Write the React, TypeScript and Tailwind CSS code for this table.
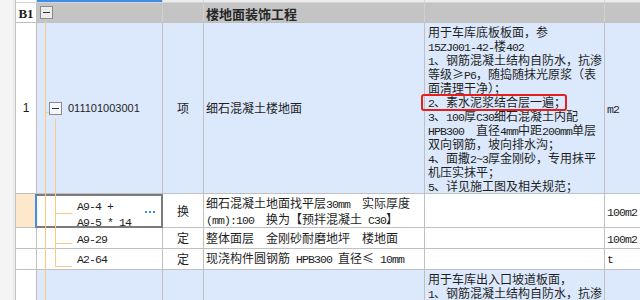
import React from "react";

function T({ s }: { s: string }) {
  const parts = s.split(/([ -~]+)/);
  return (
    <span className="whitespace-pre">
      {parts.map((p, i) =>
        p === "" ? null : /^[ -~]+$/.test(p) ? (
          <span key={i} className="font-['Liberation_Mono',monospace] text-[11.5px] tracking-[-0.9px]">
            {p}
          </span>
        ) : (
          <span key={i}>{p}</span>
        )
      )}
    </span>
  );
}

function MinusBox({ light }: { light?: boolean }) {
  return (
    <div
      className={
        "w-[13px] h-[13px] shrink-0 border border-[#8a8a8a] flex items-center justify-center " +
        (light ? "bg-[#f4f7fc]" : "bg-[#ececec]")
      }
    >
      <div className="w-[7px] h-[1px] bg-[#333333]" />
    </div>
  );
}

const descMain = [
  "用于车库底板板面，参",
  "15ZJ001-42-楼402",
  "1、钢筋混凝土结构自防水，抗渗",
  "等级≥P6，随捣随抹光原浆（表",
  "面清理干净）；",
  "2、素水泥浆结合层一遍；",
  "3、100厚C30细石混凝土内配",
  "HPB300　直径4mm中距200mm单层",
  "双向钢筋，坡向排水沟；",
  "4、面撒2~3厚金刚砂，专用抹平",
  "机压实抹平；",
  "5、详见施工图及相关规范；",
];

const descLast = ["用于车库出入口坡道板面，", "1、钢筋混凝土结构自防水，抗渗"];

const cell = "shrink-0 border-r border-b border-[#c0c0c0]";

export default function App() {
  return (
    <div className="relative w-[640px] h-[300px] overflow-hidden bg-white text-[12px] text-[#1e1e1e] font-['Noto_Sans_CJK_SC',sans-serif]">
      <div className="flex h-full">
        {/* left strip */}
        <div className="w-[16px] shrink-0 h-full bg-[#f4f4f4] border-r border-[#c4c4c4] flex justify-end">
          <div className="w-[2px] h-full bg-[#ebebeb]" />
        </div>

        <div className="flex-1 flex flex-col min-w-0">
          {/* top thin row */}
          <div className="flex h-[3px]">
            <div className={cell + " w-[21px] bg-white border-[#d6d6d6]"} />
            <div className={cell + " w-[126px] bg-[#3d8ee6] border-[#d6d6d6]"} />
            <div className={cell + " w-[41px] bg-[#ececec] border-[#d6d6d6]"} />
            <div className={cell + " w-[221px] bg-[#ececec] border-[#d6d6d6]"} />
            <div className={cell + " w-[180px] bg-[#ececec] border-[#d6d6d6]"} />
            <div className="flex-1 bg-[#ececec] border-b border-[#d6d6d6]" />
          </div>

          {/* header row */}
          <div className="flex h-[23px]">
            <div className={cell + " w-[21px] bg-white flex items-center justify-center pt-[1px]"}>
              <span className="font-['Liberation_Serif',serif] font-bold text-[13px] leading-none">B1</span>
            </div>
            <div className={cell + " w-[126px] bg-[#c4c4c4] border-r-[#d0d0d0] flex items-center pl-[3px]"}>
              <MinusBox />
            </div>
            <div className={cell + " w-[41px] bg-[#c4c4c4] border-r-[#d0d0d0]"} />
            <div className={cell + " w-[221px] bg-[#c4c4c4] border-r-[#d0d0d0] flex items-center pl-[2px] pt-[2px]"}>
              <span className="font-bold text-[13px] leading-none text-[#262626]">楼地面装饰工程</span>
            </div>
            <div className={cell + " w-[180px] bg-[#c4c4c4] border-r-[#d0d0d0]"} />
            <div className="flex-1 bg-[#c4c4c4] border-b border-[#c0c0c0]" />
          </div>

          {/* row 1 */}
          <div className="flex h-[172px]">
            <div className={cell + " w-[21px] bg-white flex items-center justify-center"}>
              <span className="font-['Liberation_Sans',sans-serif] text-[12px]">1</span>
            </div>
            <div className={cell + " w-[126px] bg-[#dce9fc] flex items-center pl-[12px]"}>
              <MinusBox light />
              <span className="ml-[6px] font-['Liberation_Sans',sans-serif] text-[11px]">011101003001</span>
            </div>
            <div className={cell + " w-[41px] bg-[#dce9fc] flex items-center justify-center"}>项</div>
            <div className={cell + " w-[221px] bg-[#dce9fc] flex items-center pl-[2px]"}>细石混凝土楼地面</div>
            <div className={cell + " relative w-[180px] bg-[#dce9fc] pl-[3px] pt-[2px] leading-[14px] whitespace-nowrap"}>
              {descMain.map((l, i) => (
                <div key={i} className="h-[14px]">
                  <T s={l} />
                </div>
              ))}
              <div className="absolute left-[-4px] top-[71px] w-[146px] h-[17px] border-2 border-[#e3201c] rounded-[3px]" />
            </div>
            <div className="flex-1 bg-[#dce9fc] border-b border-[#c0c0c0] flex items-center pl-[2px]">
              <T s="m2" />
            </div>
          </div>

          {/* row A9-4 (selected) */}
          <div className="flex h-[34px]">
            <div className={cell + " w-[21px] bg-[#fde8cc]"} />
            <div className={cell + " relative w-[126px] bg-white flex items-start"}>
              <div className="pl-[40px] pt-[4px] leading-[14px] whitespace-nowrap">
                <div><T s="A9-4 +" /></div>
                <div><T s="A9-5 * 14" /></div>
              </div>
              <div className="ml-auto mr-[7px] self-center flex gap-[2px] pt-[2px]">
                <div className="w-[2px] h-[2px] bg-[#3d8ee6]" />
                <div className="w-[2px] h-[2px] bg-[#3d8ee6]" />
                <div className="w-[2px] h-[2px] bg-[#3d8ee6]" />
              </div>
              <div className="absolute left-[-2px] top-0 right-[-1px] bottom-[-1px] border-2 border-[#7b7b7b] border-l-[#3d8ee6]" />
            </div>
            <div className={cell + " w-[41px] bg-white flex items-center justify-center"}>换</div>
            <div className={cell + " w-[221px] bg-white pl-[2px] pt-[2px] leading-[14px] whitespace-nowrap"}>
              <div><T s="细石混凝土地面找平层30mm　实际厚度" /></div>
              <div><T s="(mm):100　换为【预拌混凝土 C30】" /></div>
            </div>
            <div className={cell + " w-[180px] bg-white"} />
            <div className="flex-1 bg-white border-b border-[#c0c0c0] flex items-center pl-[2px] pt-[2px]">
              <T s="100m2" />
            </div>
          </div>

          {/* row A9-29 */}
          <div className="flex h-[23px]">
            <div className={cell + " w-[21px] bg-white"} />
            <div className={cell + " w-[126px] bg-white flex items-center pl-[40px]"}>
              <T s="A9-29" />
            </div>
            <div className={cell + " w-[41px] bg-white flex items-center justify-center"}>定</div>
            <div className={cell + " w-[221px] bg-white flex items-center pl-[2px] whitespace-nowrap"}>
              <span>整体面层　金刚砂耐磨地坪　楼地面</span>
            </div>
            <div className={cell + " w-[180px] bg-white"} />
            <div className="flex-1 bg-white border-b border-[#c0c0c0] flex items-center pl-[2px]">
              <T s="100m2" />
            </div>
          </div>

          {/* row A2-64 */}
          <div className="flex h-[23px]">
            <div className={cell + " w-[21px] bg-white"} />
            <div className={cell + " w-[126px] bg-white flex items-center pl-[40px]"}>
              <T s="A2-64" />
            </div>
            <div className={cell + " w-[41px] bg-white flex items-center justify-center"}>定</div>
            <div className={cell + " w-[221px] bg-white flex items-center pl-[2px] whitespace-nowrap"}>
              <T s="现浇构件圆钢筋 HPB300 直径≤ 10mm" />
            </div>
            <div className={cell + " w-[180px] bg-white"} />
            <div className="flex-1 bg-white border-b border-[#c0c0c0] flex items-center pl-[2px]">
              <T s="t" />
            </div>
          </div>

          {/* last partial row */}
          <div className="flex flex-1">
            <div className="shrink-0 border-r border-[#c0c0c0] w-[21px] bg-white" />
            <div className="shrink-0 border-r border-[#c0c0c0] w-[126px] bg-[#dce9fc]" />
            <div className="shrink-0 border-r border-[#c0c0c0] w-[41px] bg-[#dce9fc]" />
            <div className="shrink-0 border-r border-[#c0c0c0] w-[221px] bg-[#dce9fc]" />
            <div className="shrink-0 border-r border-[#c0c0c0] w-[180px] bg-[#dce9fc] pl-[3px] pt-[2px] leading-[14px] whitespace-nowrap">
              {descLast.map((l, i) => (
                <div key={i} className="h-[14px]">
                  <T s={l} />
                </div>
              ))}
            </div>
            <div className="flex-1 bg-[#dce9fc]" />
          </div>
        </div>
      </div>

      {/* tree connector lines (overlay) */}
      <div className="pointer-events-none absolute inset-0">
        <div className="absolute left-[45px] top-[21px] w-[1px] h-[279px] bg-[#fcc882]" />
        <div className="absolute left-[45px] top-[112px] w-[4px] h-[1px] bg-[#fcc882]" />
        <div className="absolute left-[55px] top-[119px] w-[1px] h-[148px] bg-[#fcc882]" />
        <div className="absolute left-[55px] top-[213px] w-[17px] h-[1px] bg-[#fcc882]" />
        <div className="absolute left-[55px] top-[243px] w-[17px] h-[1px] bg-[#fcc882]" />
        <div className="absolute left-[55px] top-[266px] w-[17px] h-[1px] bg-[#fcc882]" />
      </div>
    </div>
  );
}
